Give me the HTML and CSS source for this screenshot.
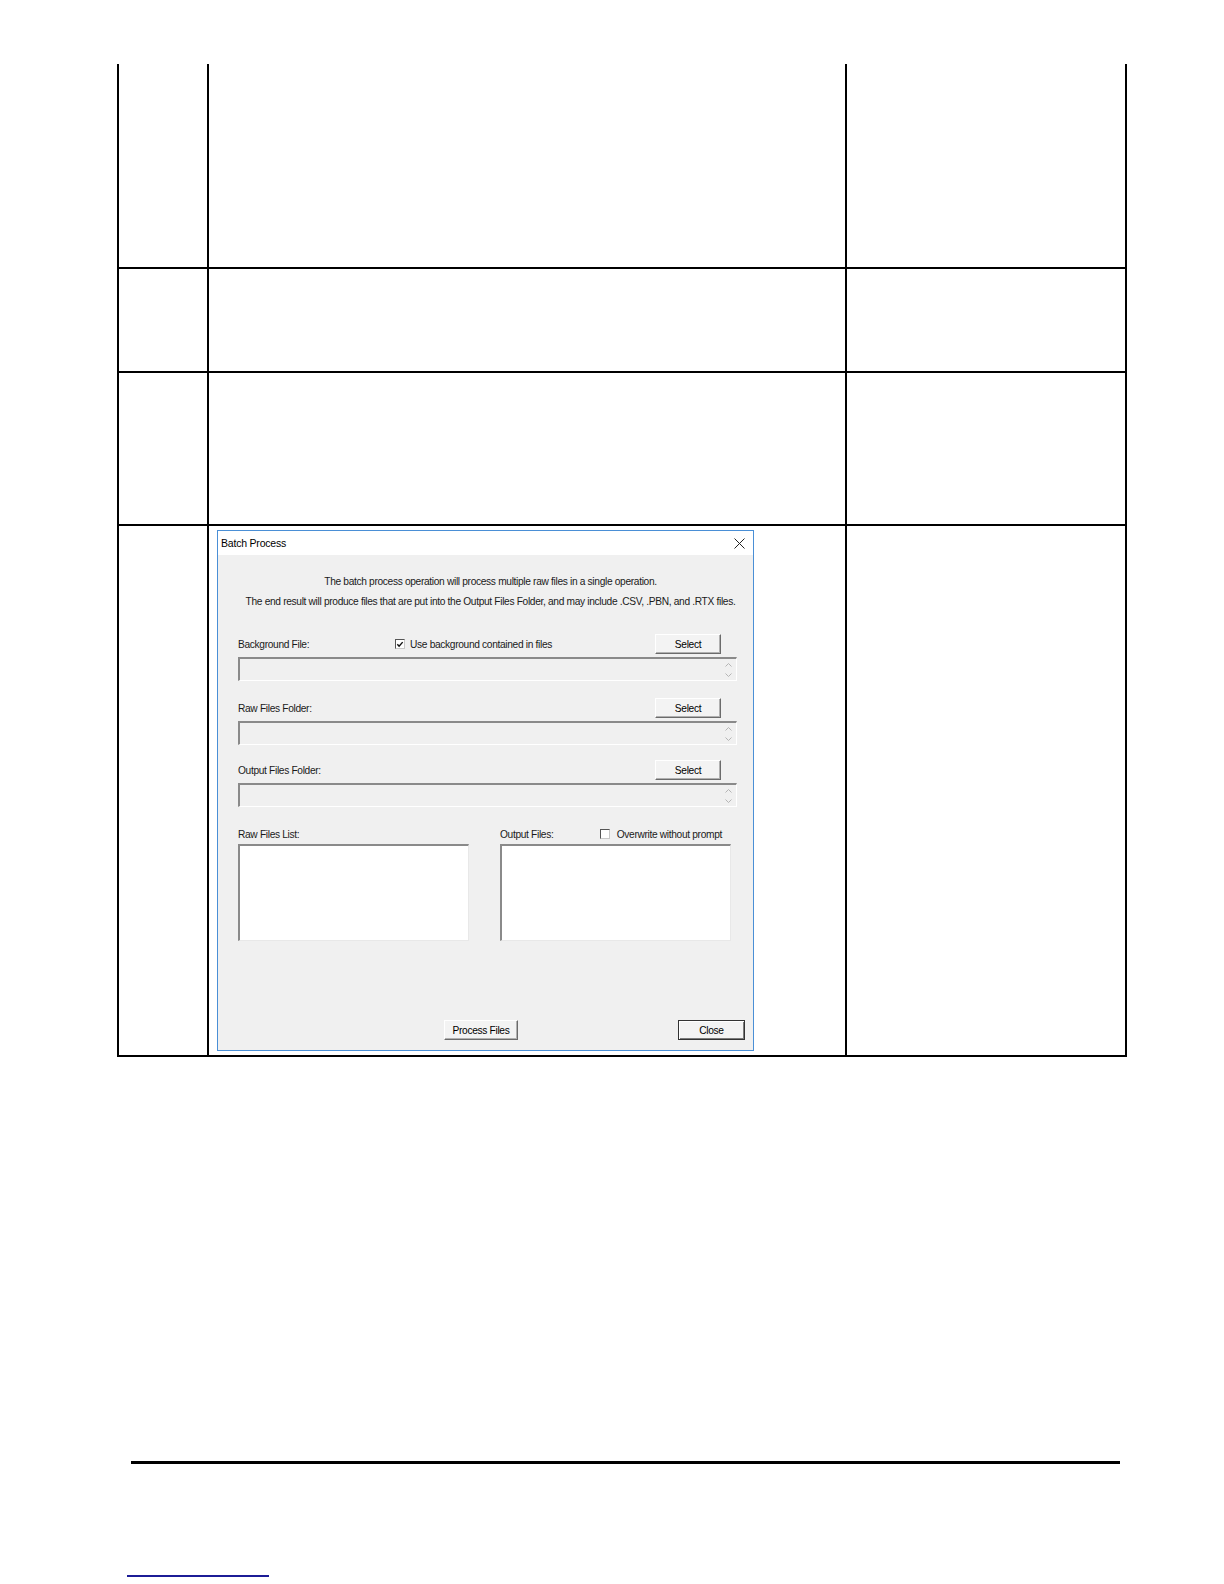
FILE: index.html
```html
<!DOCTYPE html>
<html lang="en">
<head>
<meta charset="utf-8">
<title>Batch Process</title>
<link rel="stylesheet" href="styles.css">
</head>
<body>
<div class="page">
  <table class="doc">
    <colgroup><col class="col-a"><col class="col-b"><col class="col-c"></colgroup>
    <tr class="row row-1"><td></td><td></td><td></td></tr>
    <tr class="row row-2"><td></td><td></td><td></td></tr>
    <tr class="row row-3"><td></td><td></td><td></td></tr>
    <tr class="row row-4">
      <td></td>
      <td class="dlg-cell">
        <div class="dialog">
          <div class="titlebar">
            <span class="title">Batch Process</span>
            <svg class="close-x" width="11" height="11" viewBox="0 0 11 11"><path d="M0.5 0.5 L10.5 10.5 M10.5 0.5 L0.5 10.5" stroke="#222" stroke-width="1" fill="none"/></svg>
          </div>
          <div class="dbody">
            <div class="intro">
              <div>The batch process operation will process multiple raw files in a single operation.</div>
              <div>The end result will produce files that are put into the Output Files Folder, and may include .CSV, .PBN, and .RTX files.</div>
            </div>

            <div class="fieldhead fh-1">
              <span class="label lbl-bg">Background File:</span>
              <span class="check">
                <span class="box"><svg width="9" height="9" viewBox="0 0 9 9"><path d="M1.5 4.2 L3.5 6.5 L7.5 1.8" stroke="#111" stroke-width="1.6" fill="none"/></svg></span>
                <span>Use background contained in files</span>
              </span>
              <span class="btn btn-select">Select</span>
            </div>
            <div class="textbox">
              <span class="spin"><svg width="7" height="4" viewBox="0 0 7 4"><path d="M0.5 3.5 L3.5 0.5 L6.5 3.5" stroke="#b5b5b5" fill="none"/></svg><svg width="7" height="4" viewBox="0 0 7 4"><path d="M0.5 0.5 L3.5 3.5 L6.5 0.5" stroke="#b5b5b5" fill="none"/></svg></span>
            </div>

            <div class="fieldhead fh-2">
              <span class="label">Raw Files Folder:</span>
              <span class="btn btn-select">Select</span>
            </div>
            <div class="textbox">
              <span class="spin"><svg width="7" height="4" viewBox="0 0 7 4"><path d="M0.5 3.5 L3.5 0.5 L6.5 3.5" stroke="#b5b5b5" fill="none"/></svg><svg width="7" height="4" viewBox="0 0 7 4"><path d="M0.5 0.5 L3.5 3.5 L6.5 0.5" stroke="#b5b5b5" fill="none"/></svg></span>
            </div>

            <div class="fieldhead fh-3">
              <span class="label">Output Files Folder:</span>
              <span class="btn btn-select">Select</span>
            </div>
            <div class="textbox">
              <span class="spin"><svg width="7" height="4" viewBox="0 0 7 4"><path d="M0.5 3.5 L3.5 0.5 L6.5 3.5" stroke="#b5b5b5" fill="none"/></svg><svg width="7" height="4" viewBox="0 0 7 4"><path d="M0.5 0.5 L3.5 3.5 L6.5 0.5" stroke="#b5b5b5" fill="none"/></svg></span>
            </div>

            <div class="lists">
              <div class="list-col">
                <div class="list-head"><span class="label">Raw Files List:</span></div>
                <div class="listbox"></div>
              </div>
              <div class="list-col">
                <div class="list-head">
                  <span class="label">Output Files:</span>
                  <span class="check check-ow"><span class="box"></span><span>Overwrite without prompt</span></span>
                </div>
                <div class="listbox"></div>
              </div>
            </div>

            <div class="actions">
              <span class="btn btn-process">Process Files</span>
              <span class="btn btn-close">Close</span>
            </div>
          </div>
        </div>
      </td>
      <td></td>
    </tr>
  </table>
  <div class="footer-rule"></div>
  <div class="footer-link"><span class="link-line"></span></div>
</div>
</body>
</html>
```
FILE: styles.css
```css
html, body {
  margin: 0;
  padding: 0;
  background: #fff;
}
.page {
  padding-top: 64px;
  font-family: "Liberation Sans", Arial, sans-serif;
}
.doc {
  border-collapse: collapse;
  table-layout: fixed;
  margin-left: 117px;
  width: 1008px;
}
.col-a { width: 90px; }
.col-b { width: 638px; }
.col-c { width: 280px; }
.doc td {
  border: 2px solid #000;
  padding: 0;
  vertical-align: top;
}
.row-1 td { border-top: none; }
.row-1 { height: 204px; }
.row-2 { height: 104px; }
.row-3 { height: 153px; }
.row-4 { height: 531px; }

.dlg-cell {
  padding: 4px 0 0 8px !important;
}
.dialog {
  width: 537px;
  height: 521px;
  box-sizing: border-box;
  border: 1px solid #4a8fd6;
  background: #f0f0f0;
  font-size: 10.2px;
  letter-spacing: -0.33px;
  color: #1a1a1a;
}
.titlebar {
  height: 24px;
  background: #fff;
  display: flex;
  align-items: center;
  justify-content: space-between;
  padding: 0 8px 0 3px;
}
.title {
  font-size: 10.5px;
  letter-spacing: -0.2px;
  color: #000;
}
.close-x { display: block; }

.dbody {
  padding: 0 16px 0 20px;
}
.intro {
  padding-top: 17px;
  line-height: 20px;
  text-align: center;
  margin-right: -6px;
}
.fieldhead {
  height: 20px;
  display: flex;
  align-items: center;
}
.fh-1 { margin-top: 22px; }
.fh-2 { margin-top: 17px; }
.fh-3 { margin-top: 15px; }
.label { white-space: nowrap; }
.lbl-bg { width: 157px; }
.check {
  display: flex;
  align-items: center;
  gap: 5px;
}
.box {
  width: 10px;
  height: 10px;
  box-sizing: border-box;
  border: 1px solid;
  border-color: #555 #c8c8c8 #c8c8c8 #555;
  background: #fff;
  display: flex;
  align-items: center;
  justify-content: center;
}
.box svg { display: block; }

.btn {
  box-sizing: border-box;
  height: 20px;
  display: flex;
  align-items: center;
  justify-content: center;
  background: #f3f3f3;
  border: 1px solid;
  border-color: #fff #6b6b6b #6b6b6b #fff;
  box-shadow: inset -1px -1px 0 #b0b0b0;
  color: #000;
}
.btn-select {
  width: 66px;
  margin-left: auto;
  margin-right: 16px;
}
.textbox {
  margin-top: 3px;
  height: 24px;
  box-sizing: border-box;
  border: 1px solid;
  border-width: 2px 1px 1px 2px;
  border-color: #8a8a8a #fff #fff #8a8a8a;
  background: #f0f0f0;
  display: flex;
  justify-content: flex-end;
  align-items: center;
  padding-right: 4px;
}
.spin {
  display: flex;
  flex-direction: column;
  gap: 6px;
}
.spin svg { display: block; }

.lists {
  margin-top: 17px;
  display: flex;
  gap: 31px;
}
.list-col { width: 231px; }
.list-head {
  height: 20px;
  display: flex;
  align-items: center;
}
.check-ow { margin-left: auto; margin-right: 9px; gap: 7px; }
.listbox {
  height: 97px;
  box-sizing: border-box;
  background: #fff;
  border: 1px solid;
  border-width: 2px 1px 1px 2px;
  border-color: #8a8a8a #e8e8e8 #e8e8e8 #8a8a8a;
}
.actions {
  margin-top: 79px;
  margin-right: -8px;
  display: flex;
  align-items: center;
  padding-left: 206px;
}
.btn-process { width: 74px; }
.btn-close {
  width: 67px;
  margin-left: auto;
  border-color: #333;
  box-shadow: inset 1px 1px 0 #fff, inset -1px -1px 0 #7a7a7a;
}

.footer-rule {
  margin-top: 404px;
  margin-left: 131px;
  width: 989px;
  height: 3px;
  background: #000;
}
.footer-link {
  margin-top: 95px;
  margin-left: 127px;
  height: 18px;
}
.link-line {
  display: block;
  width: 142px;
  height: 16px;
  border-bottom: 2px solid #1c1c96;
}
```
